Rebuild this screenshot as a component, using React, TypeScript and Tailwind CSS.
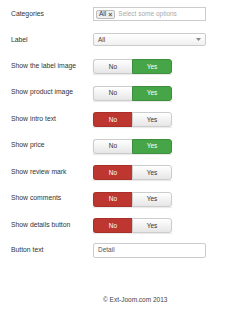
import React from 'react';

type Toggle = { label: string; value: boolean };

const toggles: Toggle[] = [
  { label: 'Show the label image', value: true },
  { label: 'Show product image', value: true },
  { label: 'Show intro text', value: false },
  { label: 'Show price', value: true },
  { label: 'Show review mark', value: false },
  { label: 'Show comments', value: false },
  { label: 'Show details button', value: false },
];

const Label: React.FC<{ text: string }> = ({ text }) => (
  <div className="w-[93px] shrink-0 pl-[11px] text-[6.8px] leading-[8px] text-[#333]">{text}</div>
);

const YesNo: React.FC<{ value: boolean }> = ({ value }) => (
  <div className="flex h-[15px] w-[79px] text-[6.5px] shadow-[0_1px_1px_rgba(0,0,0,0.08)]">
    <div
      className={
        value
          ? 'flex w-[39px] items-center justify-center rounded-l-[3px] border border-r-0 border-[#ccc] bg-gradient-to-b from-white to-[#e6e6e6] text-[#333]'
          : 'flex w-[39px] items-center justify-center rounded-l-[3px] border border-r-0 border-[#a9302a] bg-[#bd362f] text-white'
      }
    >
      No
    </div>
    <div
      className={
        value
          ? 'flex w-[40px] items-center justify-center rounded-r-[3px] border border-[#3c8d3c] bg-[#46a546] text-white'
          : 'flex w-[40px] items-center justify-center rounded-r-[3px] border border-[#ccc] bg-gradient-to-b from-white to-[#e6e6e6] text-[#333]'
      }
    >
      Yes
    </div>
  </div>
);

export default function App() {
  return (
    <div className="h-[312px] w-[250px] bg-white font-['Liberation_Sans',Arial,sans-serif]">
      <div className="flex flex-col pt-[7px]">
        <div className="flex h-[26px] items-start">
          <div className="flex h-[14px] items-center">
            <Label text="Categories" />
          </div>
          <div className="flex h-[14px] w-[113px] items-center gap-[3px] border border-[#ccc] bg-white pl-[2px]">
            <div className="flex h-[9px] items-center gap-[2px] rounded-[2px] border border-[#bbb] bg-[#eee] px-[2px] text-[6.5px] leading-none text-[#333]">
              <span>All</span>
              <span className="text-[7px] font-bold leading-none text-[#555]">×</span>
            </div>
            <span className="text-[6.5px] text-[#aaa]">Select some options</span>
          </div>
        </div>
        <div className="flex h-[26px] items-start">
          <div className="flex h-[13px] items-center">
            <Label text="Label" />
          </div>
          <div className="flex h-[13px] w-[113px] items-center justify-between rounded-[2px] border border-[#ccc] bg-gradient-to-b from-white to-[#f0f0f0] pl-[4px] pr-[4px] text-[6.5px] text-[#444]">
            <span>All</span>
            <svg width="5" height="3" viewBox="0 0 5 3">
              <path d="M0 0h5L2.5 3z" fill="#888" />
            </svg>
          </div>
        </div>
        {toggles.map((t) => (
          <div key={t.label} className="flex h-[26.5px] items-start">
            <div className="flex h-[13px] items-center">
              <Label text={t.label} />
            </div>
            <YesNo value={t.value} />
          </div>
        ))}
        <div className="mt-[-2px] flex h-[40px] items-start">
          <div className="flex h-[14px] items-center">
            <Label text="Button text" />
          </div>
          <div className="flex h-[15px] w-[113px] items-center rounded-[2px] border border-[#ccc] bg-white pl-[4px] text-[6.5px] text-[#555]">
            Detail
          </div>
        </div>
        <div className="mt-[12px] pl-[103px] text-[6.5px] text-[#444]">© Ext-Joom.com 2013</div>
      </div>
    </div>
  );
}
